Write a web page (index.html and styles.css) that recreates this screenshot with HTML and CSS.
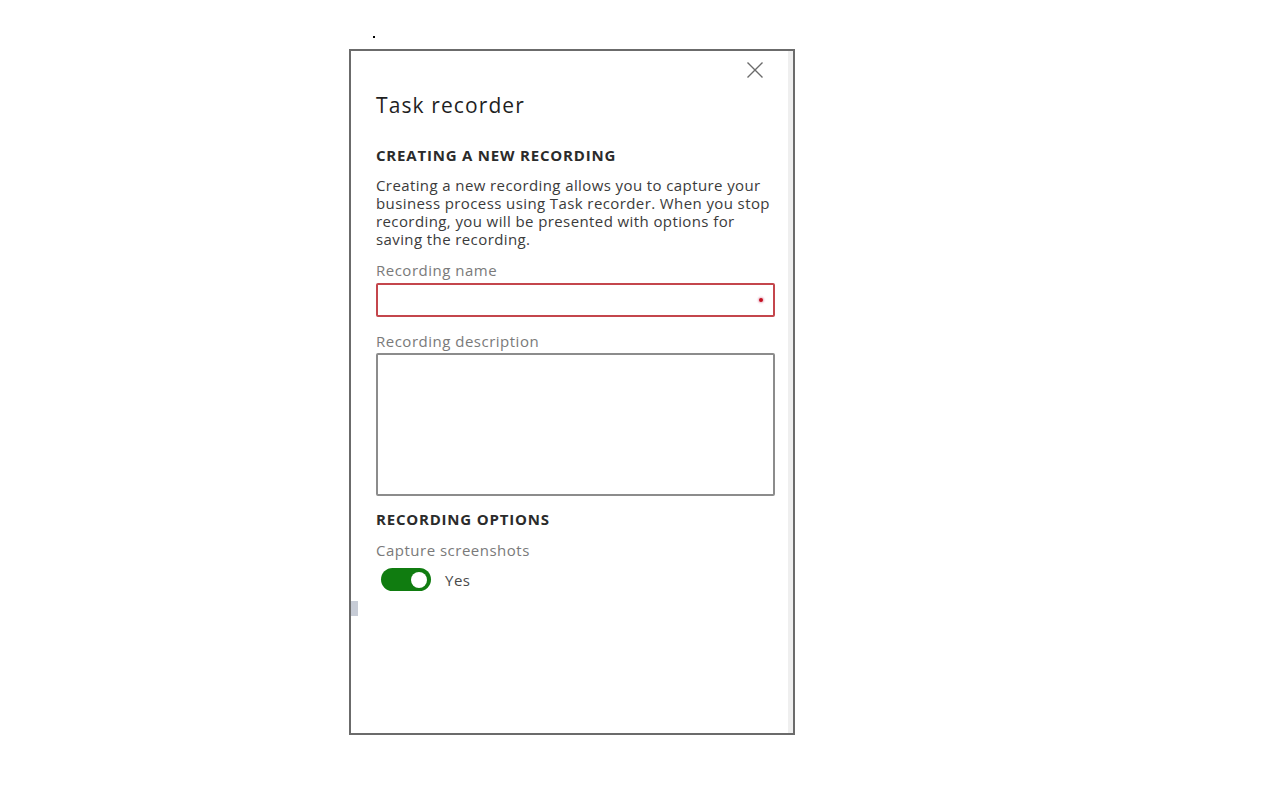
FILE: index.html
```html
<!DOCTYPE html>
<html lang="en">
<head>
<meta charset="utf-8">
<title>Task recorder</title>
<link rel="stylesheet" href="styles.css">
</head>
<body>
<div class="stage">
  <span class="dot"></span>
  <div class="panel">
    <span class="edge-mark"></span>
    <div class="content">
      <div class="close-row">
        <button class="close" aria-label="Close">
          <svg width="18" height="16" viewBox="0 0 18 16"><path d="M1.5 0.5 L16.5 15.5 M16.5 0.5 L1.5 15.5" stroke="#6b6b6b" stroke-width="1.4" fill="none"/></svg>
        </button>
      </div>
      <h1 class="title">Task recorder</h1>
      <h2 class="section">CREATING A NEW RECORDING</h2>
      <p class="desc">Creating a new recording allows you to capture your business process using Task recorder. When you stop recording, you will be presented with options for saving the recording.</p>
      <label class="label name-label">Recording name</label>
      <div class="input required"><span class="req"></span></div>
      <label class="label desc-label">Recording description</label>
      <div class="textarea"></div>
      <h2 class="section options">RECORDING OPTIONS</h2>
      <label class="label cap-label">Capture screenshots</label>
      <div class="toggle-row">
        <span class="toggle"><span class="knob"></span></span>
        <span class="toggle-text">Yes</span>
      </div>
    </div>
    <div class="scroll-strip"></div>
  </div>
</div>
</body>
</html>
```
FILE: styles.css
```css
html, body {
  margin: 0;
  padding: 0;
  background: #ffffff;
}
body {
  font-family: "Open Sans", "Noto Sans", "Liberation Sans", sans-serif;
  color: #323130;
}
.stage {
  position: relative;
  padding: 49px 0 0 349px;
  height: 751px;
}
.dot {
  position: absolute;
  left: 373px;
  top: 36px;
  width: 2px;
  height: 2px;
  background: #000;
}
.panel {
  position: relative;
  box-sizing: border-box;
  width: 446px;
  height: 686px;
  border: 2px solid #6b6b6b;
  display: flex;
}
.edge-mark {
  position: absolute;
  left: 0;
  top: 550px;
  width: 7px;
  height: 15px;
  background: #c7ccd6;
}
.content {
  flex: 1;
  padding: 11px 13px 0 25px;
}
.scroll-strip {
  width: 5px;
  background: #efefef;
}
.close-row {
  display: flex;
  justify-content: flex-end;
  height: 16px;
}
.close {
  border: 0;
  padding: 0;
  margin: 0 11px 0 0;
  background: none;
  width: 18px;
  height: 16px;
  display: block;
}
.close svg { display: block; }
.title {
  margin: 14px 0 0;
  font-size: 21px;
  line-height: 26px;
  font-weight: 400;
  color: #1f1f1f;
  letter-spacing: 1.1px;
}
.section {
  margin: 28px 0 0;
  font-size: 15px;
  line-height: 18px;
  font-weight: 700;
  color: #2b2b2b;
  letter-spacing: 0.8px;
}
.desc {
  margin: 12px 0 0;
  font-size: 15px;
  line-height: 18px;
  color: #3b3b3b;
  letter-spacing: 0.4px;
  width: 398px;
}
.label {
  display: block;
  font-size: 15px;
  line-height: 18px;
  color: #7a7a7a;
  letter-spacing: 0.5px;
}
.name-label { margin-top: 13px; }
.input {
  box-sizing: border-box;
  margin-top: 4px;
  height: 34px;
  border: 2px solid #c4464c;
  border-radius: 2px;
  display: flex;
  align-items: center;
  justify-content: flex-end;
  padding-right: 10px;
}
.req {
  width: 4px;
  height: 4px;
  border-radius: 50%;
  background: #c50f1f;
  box-shadow: 0 0 2px 1px #e9b8c8;
}
.desc-label { margin-top: 15px; }
.textarea {
  box-sizing: border-box;
  margin-top: 3px;
  height: 143px;
  border: 2px solid #8c8c8c;
  border-radius: 2px;
}
.section.options { margin-top: 14px; }
.cap-label { margin-top: 13px; }
.toggle-row {
  margin-top: 9px;
  display: flex;
  align-items: center;
  padding-left: 5px;
}
.toggle {
  box-sizing: border-box;
  width: 50px;
  height: 23px;
  border-radius: 12px;
  background: #107c10;
  display: flex;
  align-items: center;
  justify-content: flex-end;
  padding-right: 4px;
}
.knob {
  width: 16px;
  height: 16px;
  border-radius: 50%;
  background: #fff;
}
.toggle-text {
  margin-left: 14px;
  font-size: 15px;
  line-height: 18px;
  color: #4a4a4a;
  letter-spacing: 0.5px;
}
```
